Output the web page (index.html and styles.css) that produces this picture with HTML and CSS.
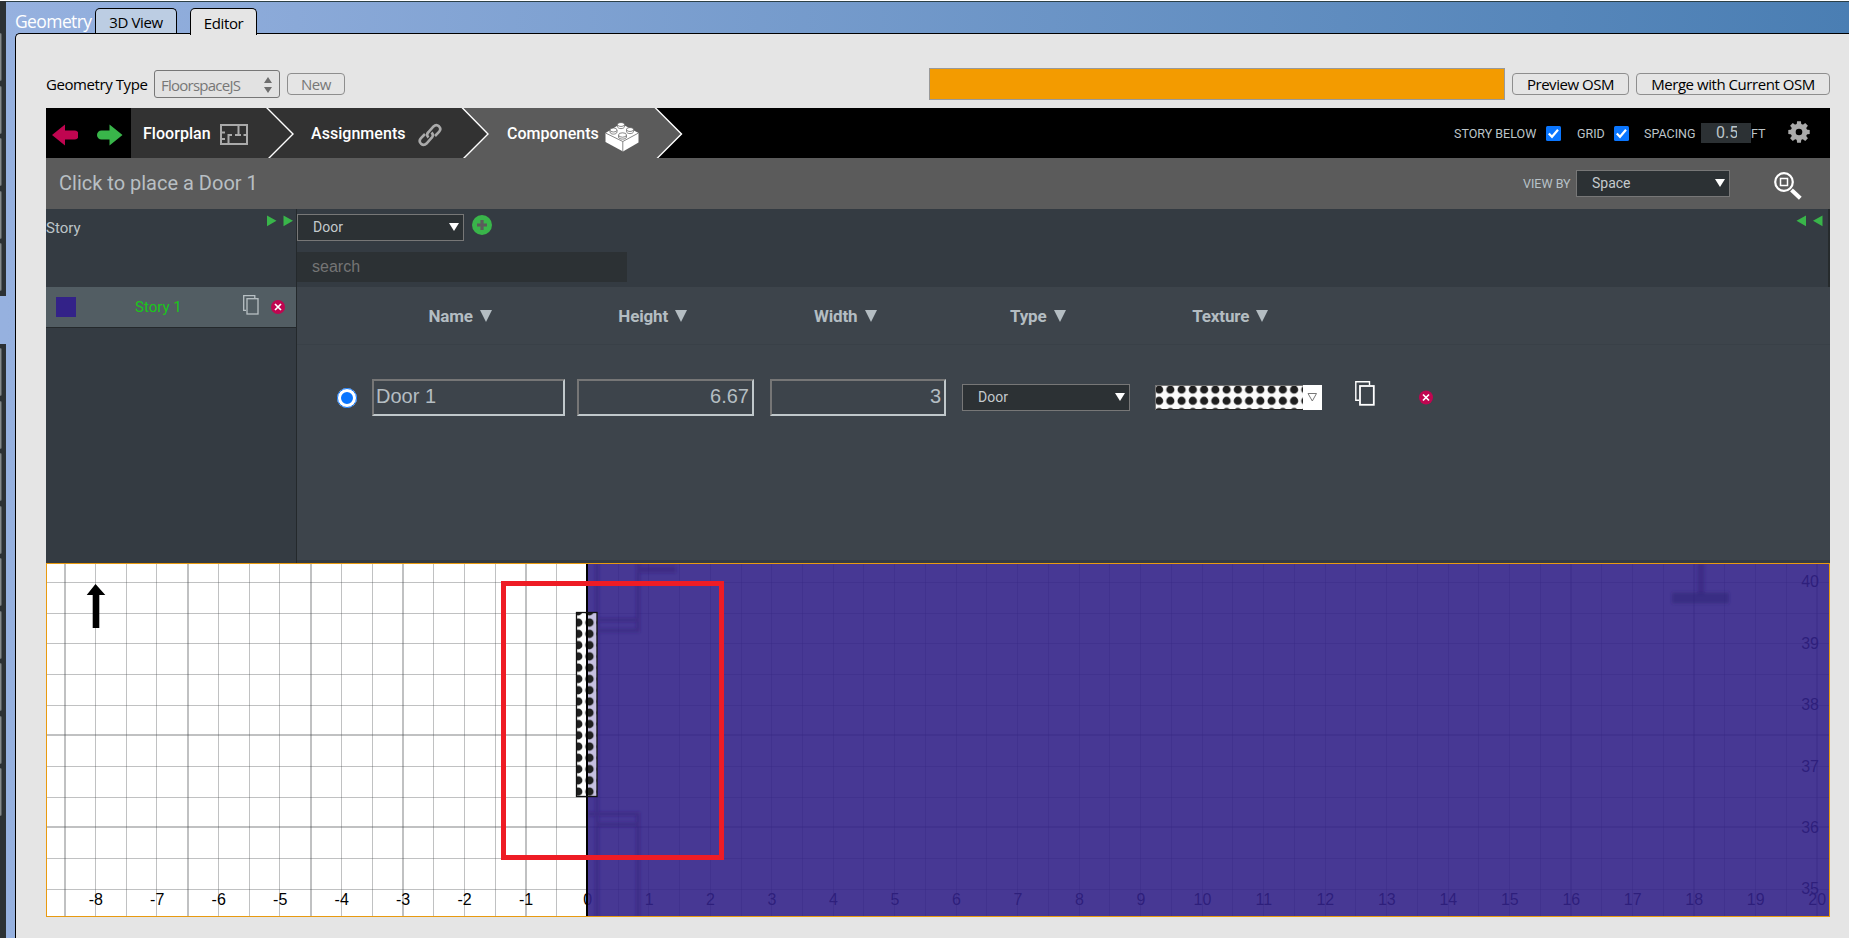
FILE: index.html
```html
<!DOCTYPE html>
<html lang="en">
<head>
<meta charset="utf-8">
<title>Geometry Editor</title>
<link rel="stylesheet" href="styles.css">
</head>
<body>
<div class="window">
  <nav class="rail">
    <i></i><i></i><i></i><i></i><i></i><i class="current"></i><i></i><i></i><i></i><i></i><i></i><i></i><i></i><i></i><i></i>
  </nav>
  <main class="main">
    <header class="tabs">
      <span class="title">Geometry</span>
      <span class="tab tab-view">3D View</span>
      <span class="tab tab-editor">Editor</span>
    </header>
    <section class="panel">
      <div class="toolbar">
        <span class="label">Geometry Type</span>
        <span class="combo"><span>FloorspaceJS</span>
          <svg width="8" height="16" viewBox="0 0 8 16"><path d="M4 0l4 6H0zM4 16l4-6H0z" fill="#6e6e6e"/></svg>
        </span>
        <span class="btn btn-new">New</span>
        <span class="progress"></span>
        <span class="btn btn-preview">Preview OSM</span>
        <span class="btn btn-merge">Merge with Current OSM</span>
      </div>
      <div class="app">
        <div class="nav">
          <svg class="nav-shapes" width="637" height="50" viewBox="46 0 637 50">
            <path d="M462 0H655L682 26 657 50H462z" fill="#5b5b5b"/>
            <path d="M131 0H462L488.500 26 463 50H131z" fill="#323232"/>
            <g fill="none" stroke="#fff" stroke-width="1.400"><path d="M266 -1L293 26 268 51M461.500 -1L488 26 463 51M654.500 -1L681.500 26 656.500 51"/></g>
          </svg>
          <div class="arrows">
            <svg width="26" height="22" viewBox="0 0 26 22"><path d="M0 11L13 .5V6.500H22.500a4.500 4.500 0 0 1 0 9H13V21.500z" fill="#c00550"/></svg>
            <svg width="26" height="22" viewBox="0 0 26 22"><path d="M25.500 11L12.500 .5V6.500H4.500a4.500 4.500 0 0 0 0 9H12.500V21.500z" fill="#39b54a"/></svg>
          </div>
          <div class="step step-floor"><span>Floorplan</span>
            <svg width="28" height="21" viewBox="0 0 28 21" fill="none" stroke="#aaa" stroke-width="2"><rect x="1" y="1" width="26" height="19"/><path d="M1 8.500H5M1 15H5M8.500 20V11H12M15 11H21M18.500 1V11M23.500 11H27"/></svg>
          </div>
          <div class="step step-assign"><span>Assignments</span>
            <svg width="24" height="24" viewBox="0 0 24 24" fill="none" stroke="#aaa" stroke-width="2.600"><path d="M10.500 14.500c-2-2-1.500-4 0-5.500l5-5.500c2-2 4-1.500 5.500-.2 1.500 1.500 1.700 3.700 0 5.500l-4 4.200"/><path d="M13.500 9.500c2 2 1.500 4 0 5.500l-5 5.500c-2 2-4 1.500-5.500.2-1.500-1.500-1.700-3.700 0-5.500l4-4.200"/></svg>
          </div>
          <div class="step step-comp"><span>Components</span>
            <svg width="34" height="31" viewBox="0 0 34 31"><path d="M.5 12L16 2.500 33.500 12V21.500L18 30.500 .5 21z" fill="#fff"/><g fill="none" stroke="#666" stroke-width=".8"><path d="M.5 12L17.800 20.500 33.500 12M17.800 20.500V30.500"/></g><g fill="#fff" stroke="#555" stroke-width=".7"><path d="M12.500 3.500v2c0 2.800 7 2.800 7 0v-2M5 9v2c0 2.800 7 2.800 7 0v-2M21.500 8.500v2c0 2.800 7 2.800 7 0v-2M13.500 14v2c0 2.800 8 2.800 8 0v-2"/><ellipse cx="16" cy="3.500" rx="3.500" ry="2"/><ellipse cx="8.500" cy="9" rx="3.500" ry="2"/><ellipse cx="25" cy="8.500" rx="3.500" ry="2"/><ellipse cx="17.500" cy="14" rx="4" ry="2.200"/></g></svg>
          </div>
          <div class="settings">
            <span class="s-story">STORY BELOW</span><svg class="check" viewBox="0 0 15 15"><rect width="15" height="15" rx="1.500" fill="#0a76ff"/><path d="M2.800 7.500l3.200 3.300L12 3.800" fill="none" stroke="#fff" stroke-width="2.200"/></svg>
            <span class="s-grid">GRID</span><svg class="check" viewBox="0 0 15 15"><rect width="15" height="15" rx="1.500" fill="#0a76ff"/><path d="M2.800 7.500l3.200 3.300L12 3.800" fill="none" stroke="#fff" stroke-width="2.200"/></svg>
            <span class="s-spacing">SPACING</span><span class="spacing-box"><span>0.5</span></span><span class="s-ft">FT</span>
            <svg class="gear" width="22" height="22" viewBox="-11 -11 22 22"><g fill="#aaa"><circle r="8.300"/><path id="t" d="M-2.400 -7L-1.900 -10.700H1.900L2.400 -7zM-2.400 7L-1.900 10.700H1.900L2.400 7z"/><use href="#t" transform="rotate(45)"/><use href="#t" transform="rotate(90)"/><use href="#t" transform="rotate(135)"/></g><circle r="3.300" fill="#000"/></svg>
          </div>
        </div>
        <div class="status">
          <span class="message">Click to place a Door 1</span>
          <span class="viewby">VIEW BY</span>
          <span class="select select-space"><span>Space</span><b></b></span>
          <svg class="magnifier" width="28" height="28" viewBox="0 0 28 28" fill="none" stroke="#fff"><circle cx="10" cy="10" r="8.800" stroke-width="2.200"/><rect x="6.500" y="6.500" width="7" height="7" stroke-width="1.500"/><path d="M17.500 18l8.800 8.300" stroke-width="4"/></svg>
        </div>
        <div class="work">
          <aside class="stories">
            <div class="stories-head"><span>Story</span>
              <svg width="27" height="12" viewBox="0 0 27 12"><path d="M0 .5l9.500 5.300L0 11.200zM16.500 .5L26 5.800 16.500 11.200z" fill="#39b54a"/></svg>
            </div>
            <div class="story-row">
              <span class="swatch"></span><span class="story-name">Story 1</span>
              <svg width="16" height="20" viewBox="0 0 16 20" fill="none" stroke="#b8c0c4" stroke-width="1.300"><path d="M3 15.300H.7V.7H11.800V3"/><rect x="4" y="3.700" width="11" height="15.300"/></svg>
              <svg class="del" width="14" height="14" viewBox="0 0 14 14"><circle cx="7" cy="7" r="7" fill="#c00550"/><path d="M4 4l6 6M10 4l-6 6" stroke="#fff" stroke-width="1.700"/></svg>
            </div>
          </aside>
          <section class="library">
            <div class="library-head">
              <div class="picker">
                <span class="select select-kind"><span>Door</span><b></b></span>
                <svg class="plus" width="20" height="20" viewBox="0 0 20 20"><circle cx="10" cy="10" r="10" fill="#39b54a"/><path d="M10 5v10M5 10h10" stroke="#5b5b5b" stroke-width="3.200"/></svg>
                <svg class="collapse" width="27" height="12" viewBox="0 0 27 12"><path d="M10 .5L.5 5.800 10 11.200zM26.500 .5L17 5.800 26.500 11.200z" fill="#39b54a"/></svg>
              </div>
              <div class="search">search</div>
            </div>
            <div class="columns">
              <span>Name <b></b></span><span>Height <b></b></span><span>Width <b></b></span><span>Type <b></b></span><span>Texture <b></b></span>
            </div>
            <div class="record">
              <span class="radio"></span>
              <span class="field f-name">Door 1</span>
              <span class="field f-height">6.67</span>
              <span class="field f-width">3</span>
              <span class="select select-type"><span>Door</span><b></b></span>
              <svg class="texture" width="167" height="25" viewBox="0 0 167 25"><defs><pattern id="dots" x="-1.500" y="-1" width="11.250" height="11.250" patternUnits="userSpaceOnUse"><circle cx="5.600" cy="5.600" r="4.100" fill="#1f1f1f"/></pattern></defs><rect width="167" height="25" fill="#fafafa"/><rect width="148" height="25" fill="url(#dots)"/><path d="M0 24.500H148" stroke="#222"/><path d="M0 .5H148M.5 0V25" stroke="#777"/><rect x="148" width="19" height="25" fill="#fff"/><path d="M153 8.500h8.500l-4.200 7.500z" fill="none" stroke="#777"/></svg>
              <svg class="copy" width="20" height="25" viewBox="0 0 20 25" fill="none" stroke="#fff" stroke-width="1.400"><path d="M4 19.300H.8V.8H14.500V4"/><rect x="5" y="5" width="13.800" height="18.800" stroke-width="1.800"/></svg>
              <svg class="remove" width="14" height="15" viewBox="0 0 14 14"><circle cx="7" cy="7" r="7" fill="#c00550"/><path d="M4 4l6 6M10 4l-6 6" stroke="#fff" stroke-width="1.700"/></svg>
            </div>
          </section>
        </div>
        <svg class="canvas" id="canvas" width="1784" height="354" viewBox="46 563 1784 354">
          <defs>
            <pattern id="doorDots" x="572.600" y="617" width="11.250" height="11.270" patternUnits="userSpaceOnUse"><circle cx="5.600" cy="5.600" r="4.200" fill="#1f1f1f"/></pattern>
            <filter id="soft" x="-10%" y="-10%" width="120%" height="120%"><feGaussianBlur stdDeviation="1.500"/></filter>
          </defs>
          <rect x="46" y="563" width="1784" height="354" fill="#fff"/>
          <g id="grid" fill="#47494d" fill-opacity=".34"></g>
          <g id="labels" class="axis"></g>
          <path d="M95.500 584l9.800 11h-6v33h-6.600v-33h-6z" fill="#000"/>
          <rect x="587" y="563" width="1243" height="354" fill="#328" fill-opacity=".9"/>
          <g filter="url(#soft)" fill="none" stroke="#2c1d74" stroke-opacity=".4" stroke-width="4">
            <path d="M597 563V917M638 563V632M597 620H640M597 630.500H640M588 814H638V917M597 824.500H638"/>
            <path d="M640 569.500H676M1701 563V594" stroke-width="7"/>
            <path d="M1672 598H1729" stroke-width="11" stroke-opacity=".5"/>
          </g>
          <rect x="577" y="612" width="20" height="184" fill="#fff"/>
          <rect x="588" y="612" width="9" height="184" fill="#c6c0e0"/>
          <rect x="577" y="612" width="20" height="184" fill="url(#doorDots)"/>
          <path d="M587 564V916" stroke="#000" stroke-width="2"/>
          <rect x="576.500" y="612.500" width="20.500" height="184" fill="none" stroke="#111" stroke-width="1.300"/>
          <rect x="503.500" y="583.500" width="218" height="274" fill="none" stroke="#ee1c25" stroke-width="5"/>
          <rect x="46.500" y="563.500" width="1783" height="353" fill="none" stroke="#e89a10"/>
        </svg>
      </div>
    </section>
  </main>
</div>
<script src="grid.js"></script>
</body>
</html>
```
FILE: grid.js
```js
const NS = 'http://www.w3.org/2000/svg';
const grid = document.getElementById('grid');
const labels = document.getElementById('labels');
const UNIT = 61.48;
const toX = n => 587.3 + n * UNIT;
const toY = n => 889.3 - (n - 35) * 61.4;

function line(x, y, w, h) {
  const r = document.createElementNS(NS, 'rect');
  r.setAttribute('x', x);
  r.setAttribute('y', y);
  r.setAttribute('width', w);
  r.setAttribute('height', h);
  grid.appendChild(r);
}

function label(text, x, y, anchor) {
  const t = document.createElementNS(NS, 'text');
  t.setAttribute('x', x);
  t.setAttribute('y', y);
  t.setAttribute('text-anchor', anchor);
  t.textContent = text;
  labels.appendChild(t);
}

const wideX = [-8.5, -6.5, -4.5, -3, -1, 16, 18, 20];
for (let n = -8.5; n <= 20; n += 0.5) {
  line(Math.floor(toX(n)), 564, wideX.includes(n) ? 2 : 1, 352);
}
for (let n = 35; n <= 40; n += 0.5) {
  const wide = n === 37.5 || n === 36;
  line(47, Math.floor(toY(n)) - (wide ? 1 : 0), 1782, wide ? 2 : 1);
}
for (let n = -8; n <= 20; n++) label(n, toX(n) + 0.3, 905, 'middle');
for (let n = 35; n <= 40; n++) label(n, 1819, toY(n) + 5, 'end');
```
FILE: styles.css
```css
* { box-sizing: border-box; }
body { margin: 0; background: #fff; font-family: Roboto, sans-serif; overflow: hidden; }
svg { display: block; flex: none; }
span { white-space: nowrap; }
.window { display: flex; height: 938px; padding-top: 1px; }
.rail { width: 6px; background: #2c3134; padding-top: 32px; display: flex; flex-direction: column; gap: 4.5px; }
.rail i { width: 2px; height: 48px; background: #858a8b; border-right: 1px solid #555b5d; border-radius: 0 2px 2px 0; }
.rail .current { width: 6px; background: #96b1df; border: 0; border-radius: 0; }
.main { flex: 1; display: flex; flex-direction: column; padding-left: 9px; border-top: 1px solid #2c4047; background: linear-gradient(90deg, #96b1df, #4a7eb3); }
.tabs, .toolbar { font-family: "Open Sans", sans-serif; }
.tabs { display: flex; height: 31px; padding-top: 6px; }
.title { width: 80px; color: #fff; font-size: 17.5px; line-height: 26px; letter-spacing: -.6px; }
.tab { border: 1px solid #000; border-bottom: 0; border-radius: 5px 5px 0 0; font-size: 15px; letter-spacing: -.35px; text-align: center; color: #000; }
.tab-view { width: 82px; line-height: 26px; background: #bccde3; }
.tab-editor { width: 67px; height: 27px; margin-left: 13px; line-height: 28px; background: #e5e5e5; z-index: 1; }
.panel { flex: 1; border: 1px solid #000; border-width: 1px 0 0 1px; border-radius: 5px 0 0 0; background: #e5e5e5; padding: 34px 0 0 30px; }
.toolbar { display: flex; align-items: center; height: 34px; margin-top: -1px; margin-bottom: 7px; font-size: 15px; color: #000; width: 1784px; }
.label { width: 108px; letter-spacing: -.42px; }
.combo { display: flex; justify-content: space-between; align-items: center; width: 126px; height: 28px; padding: 2px 7px 0 6px; border: 1px solid #777; border-radius: 3px; color: #777; letter-spacing: -.75px; background: #e2e2e2; }
.btn { height: 22px; border: 1px solid #8e8e8e; border-radius: 4px; text-align: center; line-height: 21px; letter-spacing: -.45px; }
.btn-new { width: 58px; margin-left: 7px; color: #777; }
.btn-preview { width: 117px; margin-left: 7px; }
.btn-merge { width: 194px; margin-left: 7px; }
.progress { width: 576px; height: 32px; margin-left: auto; background: #f39b00; border: 1px solid #999; }
.app { width: 1784px; }
.nav { position: relative; display: flex; height: 50px; background: #000; color: #fff; font-size: 16px; font-weight: 500; }
.nav-shapes { position: absolute; left: 0; top: 0; }
.arrows { display: flex; gap: 19px; width: 85px; padding: 16px 0 0 6px; }
.step { position: relative; display: flex; padding-left: 12px; line-height: 51px; letter-spacing: .04px; }
.step-floor { width: 168px; gap: 9px; }
.step-floor svg { margin-top: 16px; }
.step-assign { width: 196px; gap: 12px; }
.step-assign svg { margin-top: 15px; }
.step-comp { gap: 6px; }
.step-comp svg { margin-top: 13px; }
.settings { margin-left: auto; display: flex; align-items: center; padding-right: 20px; font-size: 12.5px; font-weight: 400; color: #bcc4c8; }
.check { width: 15px; height: 15px; }
.s-story { width: 92px; padding-top: 1px; }
.s-grid { width: 37px; margin-left: 16px; padding-top: 1px; }
.s-spacing { width: 57px; margin-left: 15px; padding-top: 1px; }
.s-ft { width: 37px; padding-top: 1px; }
.spacing-box { width: 50px; height: 20px; margin-top: -1px; padding-left: 15px; background: #2c3134; font-size: 16px; line-height: 19px; }
.spacing-box span { display: block; width: 21px; overflow: hidden; }
.gear { margin-top: -3px; }
.status { display: flex; align-items: center; height: 51px; padding: 0 28px 0 13px; background: #5b5b5b; color: #b8bfc3; }
.message { font-size: 20px; margin-top: -2px; }
.viewby { margin-left: auto; width: 53px; font-size: 12.5px; color: #b8c2c8; }
.select { display: flex; justify-content: space-between; align-items: center; height: 27px; padding: 0 4px 1px 15px; border: 1px solid #777; background: #2c3134; color: #c4cacd; font-size: 14px; }
.select b { border: 5px solid transparent; border-top: 8px solid #fff; border-bottom: 0; }
.select-space { width: 154px; margin-top: -1px; }
.magnifier { margin: 4px 0 0 44px; }
.work { display: flex; height: 354px; }
.stories { width: 251px; border-right: 1px solid #24292c; background: #343b42; }
.stories-head { display: flex; justify-content: space-between; height: 78px; padding: 6px 2px 0 0; font-size: 15px; color: #bcc4c8; line-height: 26px; }
.story-row { display: flex; align-items: center; height: 41px; padding-left: 10px; background: #525d63; border-bottom: 1px solid #24292c; }
.swatch { width: 20px; height: 20px; background: #328; }
.story-name { width: 168px; padding-left: 59px; margin-right: -1px; font-size: 15px; color: #19c819; }
.story-row .del { margin-left: 12px; }
.story-row svg { margin-top: -4px; }
.story-row .del { margin-top: 0; }
.library { flex: 1; background: #3d444b; border-bottom: 3px solid #343b42; }
.library-head { height: 78px; background: #343b42; border-right: 2px solid #262b2d; padding-top: 5px; }
.picker { display: flex; height: 38px; }
.select-kind { width: 167px; }
.plus { margin: 1px 0 0 8px; }
.collapse { margin: 1px 5px 0 auto; }
.search { width: 330px; height: 30px; padding-left: 15px; background: #2c3134; color: #757575; font: 16px/29px "Liberation Sans", sans-serif; }
.columns { display: flex; height: 58px; padding-left: 67px; border-bottom: 1px solid #394047; font-size: 17px; font-weight: 700; letter-spacing: -.15px; line-height: 58px; color: #b4bdc2; }
.columns span { width: 192.5px; text-align: center; }
.columns b { display: inline-block; margin-left: 3px; border: 6.5px solid transparent; border-top: 12px solid #b4bdc2; border-bottom: 0; }
.record { display: flex; align-items: center; height: 105px; padding-left: 40px; }
.radio { width: 20px; height: 20px; border: 4px solid #fff; border-radius: 50%; background: #0a76ff; outline: 1px solid #0a76ff; outline-offset: -1px; }
.field { height: 37px; padding: 0 3px 0 2px; border: 2px solid; border-color: #767676 #c0c8cb #c0c8cb #767676; color: #b4bdc2; font: 20px/31px "Liberation Sans", sans-serif; text-align: right; }
.f-name { width: 193px; margin-left: 15px; text-align: left; }
.f-height { width: 177px; margin-left: 12px; }
.f-width { width: 176px; margin-left: 16px; }
.select-type { width: 168px; margin-left: 16px; }
.texture { margin-left: 25px; }
.copy { margin: -8px 0 0 33px; }
.remove { margin-left: 44px; }
.axis { font: 16px "Liberation Sans", sans-serif; fill: #000; }
```
